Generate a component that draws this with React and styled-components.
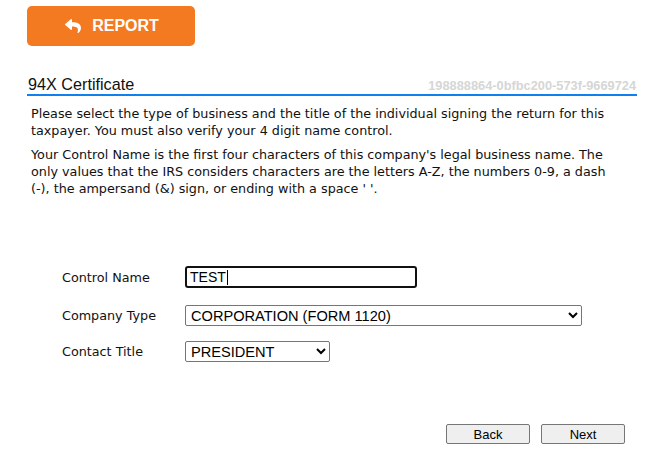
import React from "react";
import styled, { createGlobalStyle } from "styled-components";
import { FaReply } from "react-icons/fa";

const Global = createGlobalStyle`
  html, body { margin: 0; padding: 0; background: #fff; }
  body { font-family: "Liberation Sans", Arial, sans-serif; }
`;

const Page = styled.div`
  width: 610px;
  padding: 6px 0 0 27px;
  display: flex;
  flex-direction: column;
`;

const ReportButton = styled.button`
  width: 168px;
  height: 40px;
  border: none;
  border-radius: 5px;
  background: #f47a21;
  color: #fff;
  display: flex;
  align-items: center;
  justify-content: center;
  gap: 11px;
  font-family: "Liberation Sans", Arial, sans-serif;
  font-weight: bold;
  font-size: 16px;
  padding: 0 0 0 2px;
  cursor: pointer;
`;

const Header = styled.div`
  margin-top: 29px;
  display: flex;
  justify-content: space-between;
  align-items: baseline;
  border-bottom: 2px solid #0f80ec;
  padding: 0 1px 2px 1px;
  box-sizing: border-box;
  height: 21px;
`;

const Title = styled.span`
  font-size: 16.2px;
  color: #111;
`;

const Guid = styled.span`
  font-size: 12.8px;
  font-weight: bold;
  color: #d6d6d6;
`;

const Text = styled.p`
  margin: ${(p) => p.$top}px 0 0 4px;
  font-family: "DejaVu Sans", sans-serif;
  font-size: 12.75px;
  line-height: 17px;
  color: #111;
  white-space: nowrap;
`;

const Form = styled.div`
  margin-top: 69px;
  margin-left: 35px;
  display: grid;
  grid-template-columns: 123px auto;
  row-gap: 15px;
  align-items: center;
  justify-items: start;
`;

const Label = styled.label`
  font-family: "DejaVu Sans", sans-serif;
  font-size: 12.75px;
  color: #111;
  margin-bottom: ${(p) => p.$lift || 0}px;
`;

const InputWrap = styled.div`
  position: relative;
  margin-bottom: 2px;
`;

const TextInput = styled.input`
  width: 232px;
  height: 22px;
  box-sizing: border-box;
  border: 2px solid #111;
  border-radius: 3px;
  padding: 0 3px;
  font-family: "Liberation Sans", Arial, sans-serif;
  font-size: 14px;
  color: #000;
  outline: none;
`;

const Caret = styled.span`
  position: absolute;
  left: 42px;
  top: 4px;
  width: 1px;
  height: 15px;
  background: #000;
`;

const Select = styled.select`
  width: ${(p) => p.$w}px;
  height: 21px;
  box-sizing: border-box;
  border: 1px solid #767676;
  border-radius: 2px;
  background: #fff;
  font-family: "Liberation Sans", Arial, sans-serif;
  font-size: 14.6px;
  color: #000;
  padding: 0 0 0 1px;
`;

const Footer = styled.div`
  margin-top: 62px;
  display: flex;
  justify-content: flex-end;
  gap: 11px;
  padding-right: 12px;
`;

const NavButton = styled.button`
  width: 84px;
  height: 20px;
  box-sizing: border-box;
  border: 1px solid #767676;
  border-radius: 2px;
  background: #efefef;
  font-family: "Liberation Sans", Arial, sans-serif;
  font-size: 13px;
  color: #000;
  padding: 0;
`;

export default function App() {
  return (
    <>
      <Global />
      <Page>
        <ReportButton>
          <FaReply size={16} />
          REPORT
        </ReportButton>
        <Header>
          <Title>94X Certificate</Title>
          <Guid>198888864-0bfbc200-573f-9669724</Guid>
        </Header>
        <Text $top={9}>
          Please select the type of business and the title of the individual signing the return for this
          <br />
          taxpayer. You must also verify your 4 digit name control.
        </Text>
        <Text $top={7}>
          Your Control Name is the first four characters of this company's legal business name. The
          <br />
          only values that the IRS considers characters are the letters A-Z, the numbers 0-9, a dash
          <br />
          (-), the ampersand (&amp;) sign, or ending with a space ' '.
        </Text>
        <Form>
          <Label $lift={2}>Control Name</Label>
          <InputWrap>
            <TextInput defaultValue="TEST" />
            <Caret />
          </InputWrap>
          <Label>Company Type</Label>
          <Select $w={397} defaultValue="corp">
            <option value="corp">CORPORATION (FORM 1120)</option>
          </Select>
          <Label>Contact Title</Label>
          <Select $w={145} defaultValue="pres">
            <option value="pres">PRESIDENT</option>
          </Select>
        </Form>
        <Footer>
          <NavButton>Back</NavButton>
          <NavButton>Next</NavButton>
        </Footer>
      </Page>
    </>
  );
}
